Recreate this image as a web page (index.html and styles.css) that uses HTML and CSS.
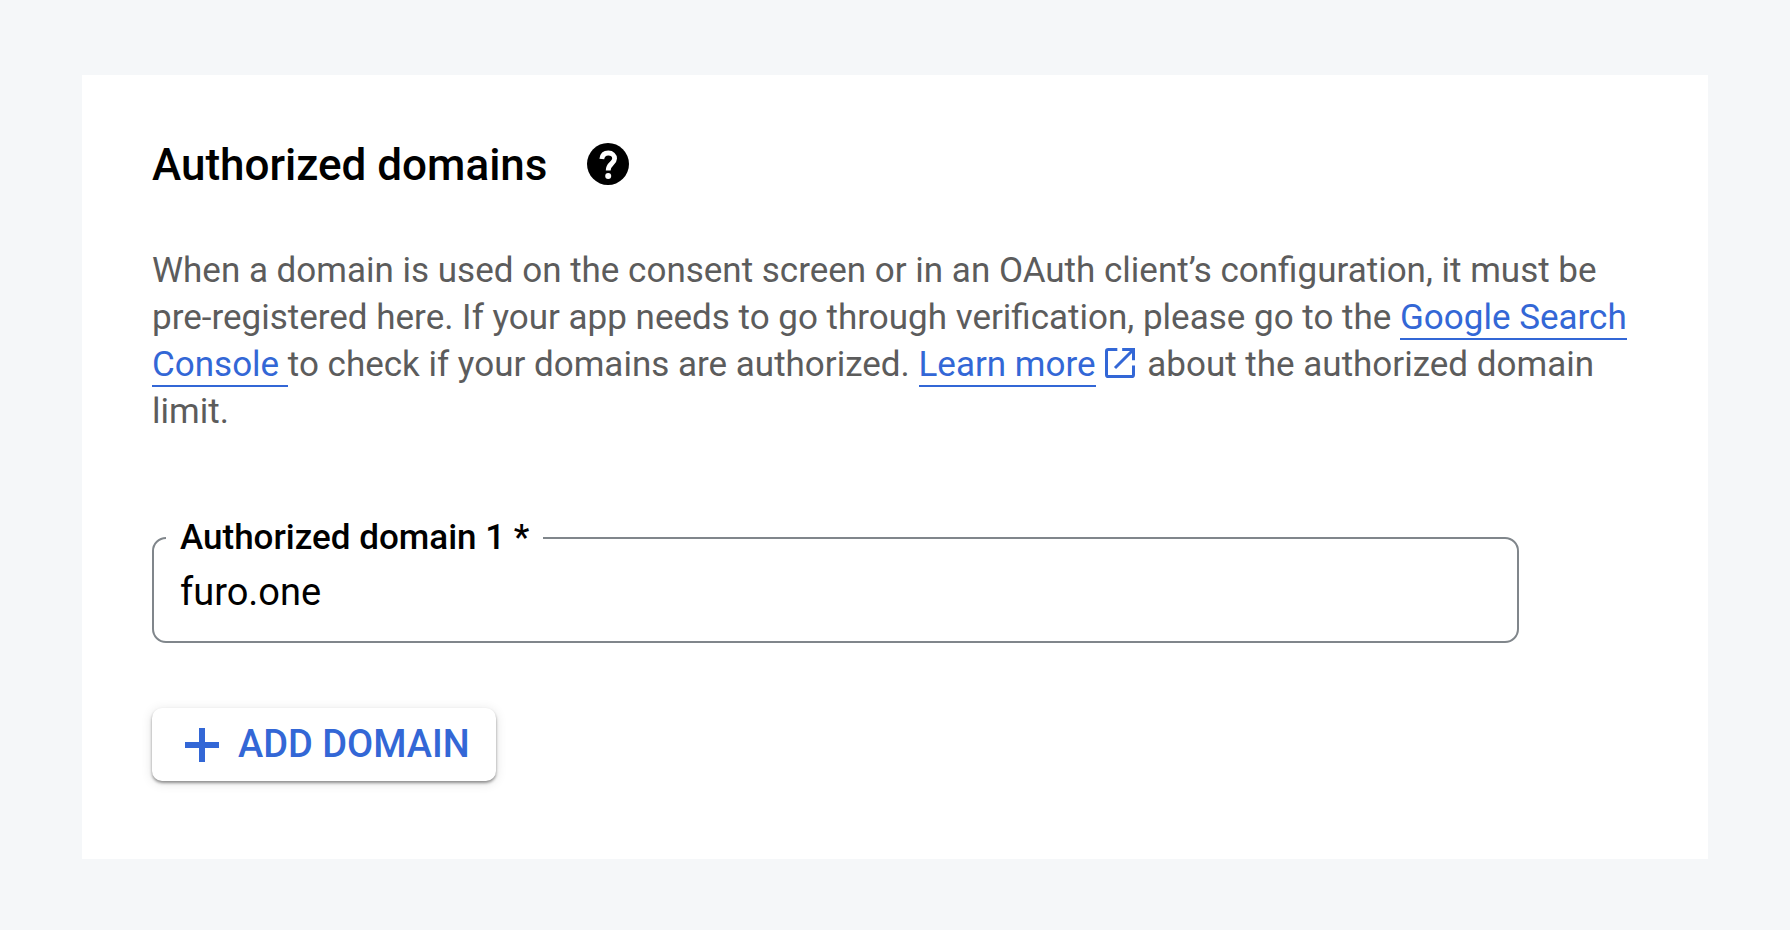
FILE: index.html
```html
<!DOCTYPE html>
<html lang="en">
<head>
<meta charset="utf-8">
<meta name="viewport" content="width=device-width, initial-scale=1">
<title>Authorized domains</title>
<link rel="stylesheet" href="styles.css">
</head>
<body>
<main class="card">
  <header class="card-header">
    <h1 class="title">Authorized domains</h1>
    <button class="help" type="button" aria-label="Help">
      <svg class="help-icon" viewBox="0 0 42 42" aria-hidden="true">
        <circle class="help-disc" cx="21" cy="21" r="21"/>
        <path class="help-hook" d="M14.800 16C15.300 11.800 18 10 21.300 10C25.300 10 27.600 12.500 27.600 15.600C27.600 20.500 21.200 20.500 21.200 27.500"/>
        <circle class="help-dot" cx="21.200" cy="33" r="3"/>
      </svg>
    </button>
  </header>
  <p class="description">When a domain is used on the consent screen or in an OAuth client’s configuration, it must be pre-registered here. If your app needs to go through verification, please go to the <a class="link" href="#search-console">Google Search Console </a>to check if your domains are authorized. <a class="link" href="#learn-more">Learn more</a><svg class="external-icon" viewBox="0 0 18 18" aria-hidden="true"><path d="M7.400 .9H2Q.9.9.9 2V16Q.9 17.100 2 17.100H16Q17.100 17.100 17.100 16V10.500M10.300 .9H17.100V7.400M17.100.9L6 12"/></svg> about the authorized domain limit.</p>
  <form class="domain-form">
    <fieldset class="field">
      <legend class="field-legend"><label for="domain-1">Authorized domain 1 *</label></legend>
      <input class="field-input" id="domain-1" type="text" value="furo.one" required>
    </fieldset>
    <button class="add-button" type="button">
      <svg class="add-icon" viewBox="0 0 34 34" aria-hidden="true"><path d="M17 0v34M0 17h34"/></svg>
      Add domain
    </button>
  </form>
</main>
</body>
</html>
```
FILE: styles.css
```css
* {
  box-sizing: border-box;
}

body {
  margin: 0;
  padding: 75px 82px 72px;
  background: #f5f7f9;
  color: #000;
  font-family: Roboto, "Liberation Sans", sans-serif;
}

.card {
  padding: 65px 66px 78px 70px;
  background: #fff;
}

.card-header {
  display: flex;
  align-items: flex-start;
  gap: 40px;
}

.title {
  margin: 0;
  font-size: 44px;
  line-height: 50px;
  font-weight: 500;
}

.help {
  display: flex;
  padding: 3px 0;
  border: 0;
  background: none;
  color: inherit;
}

.help-icon {
  width: 42px;
  height: 42px;
}

.help-disc {
  fill: currentColor;
}

.help-hook {
  fill: none;
  stroke: #fff;
  stroke-width: 4.8;
}

.help-dot {
  fill: #fff;
}

.description {
  margin: 57px 0 0;
  color: #5c5c5c;
  font-size: 35px;
  line-height: 47px;
}

.link {
  border-bottom: 2px solid #3367d6;
  color: #3367d6;
  text-decoration: none;
}

.external-icon {
  width: 30px;
  height: 30px;
  margin: 0 4px 0 9px;
  fill: none;
  stroke: #3367d6;
  stroke-width: 1.8;
  vertical-align: -2px;
}

.domain-form {
  margin-top: 82px;
}

.field {
  min-width: 0;
  margin: 0 123px 0 0;
  padding: 3px 12px 19px;
  border: 2px solid #80868b;
  border-radius: 14px;
}

.field-legend {
  padding: 0 14px;
  font-size: 35px;
  line-height: 42px;
  font-weight: 500;
}

.field-input {
  display: block;
  width: 100%;
  padding: 0 14px;
  border: 0;
  outline: 0;
  background: none;
  color: #000;
  font-family: inherit;
  font-size: 38px;
  line-height: 60px;
}

.add-button {
  display: flex;
  align-items: center;
  gap: 19px;
  margin-top: 65px;
  padding: 15px 26px 15px 33px;
  border: 0;
  border-radius: 10px;
  background: #fff;
  box-shadow: 0 2px 3px rgba(0, 0, 0, .4), 0 2px 12px rgba(0, 0, 0, .12);
  color: #3367d6;
  font-family: inherit;
  font-size: 38px;
  line-height: 43px;
  font-weight: 500;
  text-transform: uppercase;
}

.add-icon {
  width: 34px;
  height: 34px;
  stroke: currentColor;
  stroke-width: 6;
}
```
